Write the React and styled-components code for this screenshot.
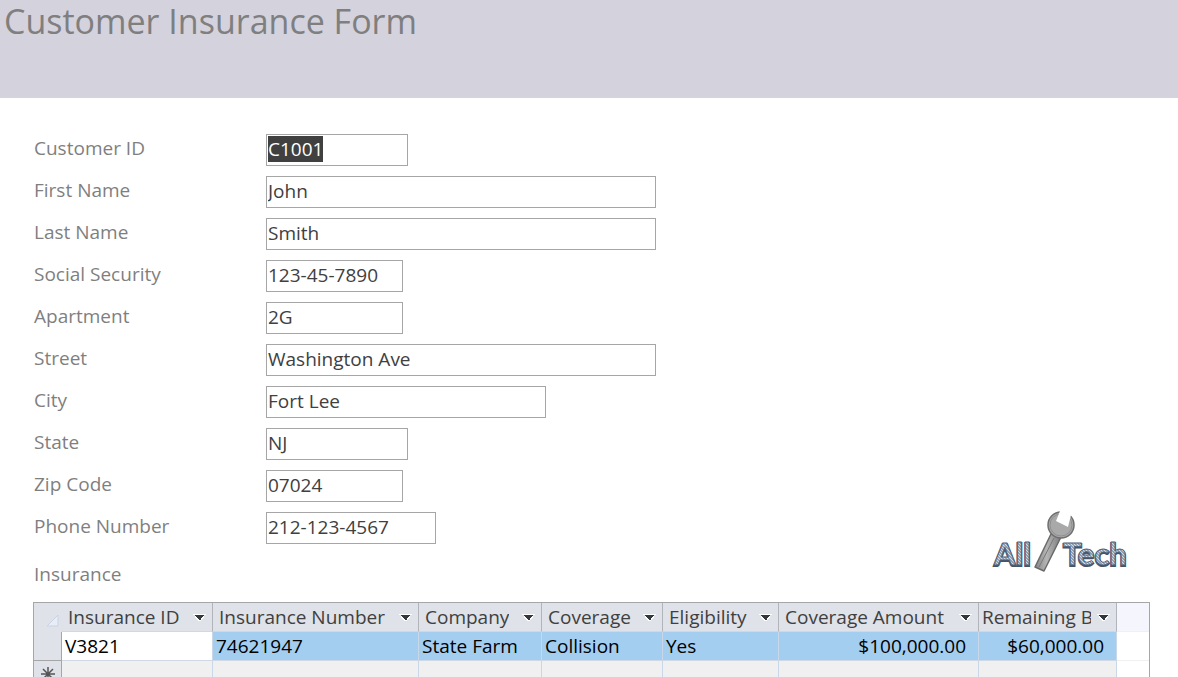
import React, { useEffect, useRef } from "react";
import styled, { createGlobalStyle } from "styled-components";

const GlobalStyle = createGlobalStyle`
  * { box-sizing: border-box; }
  body {
    margin: 0;
    overflow: hidden;
    background: #ffffff;
    font-family: "Open Sans", "Liberation Sans", sans-serif;
    font-size: 19px;
  }
`;

const Banner = styled.header`
  height: 98px;
  padding: 0 4px;
  background: #d4d2dd;
`;

const Title = styled.h1`
  margin: 0;
  font-size: 34px;
  font-weight: 400;
  line-height: 42px;
  color: #7f7f7f;
`;

const Page = styled.main`
  padding: 36px 28px 0 33px;
`;

const Details = styled.div`
  display: flex;
  justify-content: space-between;
  align-items: flex-end;
  padding-right: 22px;
`;

const Fields = styled.form`
  display: flex;
  flex-direction: column;
  gap: 10px;
`;

const Field = styled.div`
  display: grid;
  grid-template-columns: 232px auto;
  padding-left: 1px;
  justify-content: start;
`;

const Label = styled.label`
  line-height: 28px;
  color: #7f7f7f;
`;

const TextBox = styled.input`
  width: ${({ $width }) => $width}px;
  height: 32px;
  padding: 0 1px 3px;
  border: 1px solid #a6a6a6;
  border-radius: 0;
  outline: none;
  background: #ffffff;
  font: inherit;
  line-height: 27px;
  color: #404040;
  &::selection { background: #404040; color: #ffffff; }
`;

const SectionTitle = styled.h2`
  margin: 16px 0 14px;
  padding-left: 1px;
  font-size: 19px;
  font-weight: 400;
  line-height: 28px;
  color: #7f7f7f;
`;

const Logo = styled.svg`
  width: 138px;
  height: 64px;
  margin-bottom: 30px;
  overflow: visible;
`;

const Sheet = styled.table`
  width: 100%;
  table-layout: fixed;
  border-collapse: separate;
  border-spacing: 0;
  border: 1px solid #a6a6a6;
  border-bottom: 0;
`;

const Col = styled.col`
  width: ${({ $width }) => ($width ? `${$width}px` : "auto")};
`;

const HeadCell = styled.th`
  height: 29px;
  padding: 0 6px 0 ${({ $tight }) => ($tight ? 3 : 6)}px;
  border-right: 1px solid #b1b5ba;
  border-bottom: 1px solid #d0d7e5;
  background: #dfe2e8;
  font-weight: 400;
  line-height: 28px;
  color: #404040;
`;

const HeadContent = styled.div`
  display: flex;
  align-items: center;
  justify-content: space-between;
  gap: 6px;
`;

const HeadText = styled.span`
  overflow: hidden;
  white-space: nowrap;
`;

const MenuButton = styled.button`
  flex: none;
  display: flex;
  padding: 2px 0 0;
  border: 0;
  background: none;
`;

const Corner = styled.td`
  height: 29px;
  padding: 0;
  vertical-align: bottom;
  background: #dfe2e8;
  border-right: 1px solid ${({ $ruled }) => ($ruled ? "#a6a6a6" : "#dfe2e8")};
  border-bottom: 1px solid ${({ $ruled }) => ($ruled ? "#a6a6a6" : "#dfe2e8")};
  line-height: 0;
  text-align: center;
`;

const CornerMark = styled.svg`
  display: inline-block;
  margin-left: 11px;
`;

const Cell = styled.td`
  height: 29px;
  padding: 0 ${({ $right }) => $right || 3}px 0 3px;
  border-right: 1px solid #c8d8e8;
  border-bottom: 1px solid #d0d7e5;
  background: ${({ $tone }) =>
    ({ current: "#ffffff", selected: "#a4cef0", blank: "#f0f0f0" })[$tone]};
  line-height: 28px;
  white-space: nowrap;
  text-align: ${({ $right }) => ($right ? "right" : "left")};
  color: #000000;
`;

const Filler = styled.td`
  padding: 0;
  border-bottom: 1px solid #f0f0f0;
  background: ${({ $head }) => ($head ? "#f5f5fd" : "#ffffff")};
`;

const fields = [
  ["id", "Customer ID", "C1001", 142],
  ["first", "First Name", "John", 390],
  ["last", "Last Name", "Smith", 390],
  ["ssn", "Social Security", "123-45-7890", 137],
  ["apartment", "Apartment", "2G", 137],
  ["street", "Street", "Washington Ave", 390],
  ["city", "City", "Fort Lee", 280],
  ["state", "State", "NJ", 142],
  ["zip", "Zip Code", "07024", 137],
  ["phone", "Phone Number", "212-123-4567", 170],
];

const columns = [
  { name: "Insurance ID", value: "V3821", width: 151 },
  { name: "Insurance Number", value: "74621947", width: 206 },
  { name: "Company", value: "State Farm", width: 123 },
  { name: "Coverage", value: "Collision", width: 121 },
  { name: "Eligibility", value: "Yes", width: 116 },
  { name: "Coverage Amount", value: "$100,000.00", width: 200, right: 12 },
  { name: "Remaining Balance", value: "$60,000.00", width: 138, right: 12, tight: true },
];

function Arrow() {
  return (
    <svg width="13" height="8" viewBox="0 0 13 8" shapeRendering="crispEdges" aria-hidden="true">
      <path d="M0 0h13v1H0zM2 2h9v2h-1v1H9v1H8v1H5V6H4V5H3V4H2z" fill="#ffffff" />
      <path d="M2 1h9v1h-1v1H9v1H8v2H6V5H5V4H4V3H3V2H2z" fill="#33383f" />
    </svg>
  );
}

function AllTechLogo() {
  return (
    <Logo viewBox="0 0 138 64" role="img" aria-label="All Tech">
      <defs>
        <pattern id="weave" width="3" height="3" patternUnits="userSpaceOnUse">
          <rect width="3" height="3" fill="#5d7490" />
          <path d="M0 0L3 3M-1 2L1 4M2 -1L4 1" stroke="#d3dae2" strokeWidth="1.3" />
        </pattern>
        <linearGradient id="steel" x1="0" x2="1">
          <stop offset="0" stopColor="#858585" />
          <stop offset=".45" stopColor="#b5b5b5" />
          <stop offset="1" stopColor="#7c7c7c" />
        </linearGradient>
      </defs>
      <g fontFamily="Lato, sans-serif" fontWeight="700" fontSize="31">
        <g fill="#46546a" stroke="#46546a" strokeWidth="2">
          <text x="4" y="58">All</text>
          <text x="73" y="58">Tech</text>
        </g>
        <g fill="url(#weave)" stroke="#4f627b" strokeWidth=".8">
          <text x="4" y="57">All</text>
          <text x="73" y="57">Tech</text>
        </g>
      </g>
      <path d="M61 26L45 59L54 63L71 29z" fill="url(#steel)" stroke="#6a6a6a" strokeWidth="1.5" strokeLinejoin="round" />
      <path d="M64 30L49 59" stroke="#7a7a7a" fill="none" />
      <circle cx="71" cy="17" r="13" fill="#a9a9a9" stroke="#6f6f6f" strokeWidth="1.5" />
      <circle cx="71" cy="17" r="11" fill="none" stroke="#8f8f8f" />
      <path d="M70 3L66 13L78 19L81 7L79 3z" fill="#ffffff" />
    </Logo>
  );
}

export default function App() {
  const firstBox = useRef(null);

  useEffect(() => {
    firstBox.current.focus();
    firstBox.current.select();
  }, []);

  return (
    <>
      <GlobalStyle />
      <Banner>
        <Title>Customer Insurance Form</Title>
      </Banner>
      <Page>
        <Details>
          <div>
            <Fields>
              {fields.map(([id, label, value, width], i) => (
                <Field key={id}>
                  <Label htmlFor={id}>{label}</Label>
                  <TextBox
                    id={id}
                    ref={i === 0 ? firstBox : undefined}
                    defaultValue={value}
                    $width={width}
                    spellCheck={false}
                  />
                </Field>
              ))}
            </Fields>
            <SectionTitle>Insurance</SectionTitle>
          </div>
          <AllTechLogo />
        </Details>
        <Sheet>
          <colgroup>
            <Col $width={28} />
            {columns.map((c) => (
              <Col key={c.name} $width={c.width} />
            ))}
            <Col />
          </colgroup>
          <thead>
            <tr>
              <Corner>
                <CornerMark width="12" height="16" viewBox="0 0 12 16" aria-hidden="true">
                  <path d="M11 0V11H0z" fill="#e9edf5" stroke="#c9d3e4" />
                </CornerMark>
              </Corner>
              {columns.map((c) => (
                <HeadCell key={c.name} scope="col" $tight={c.tight}>
                  <HeadContent>
                    <HeadText>{c.name}</HeadText>
                    <MenuButton type="button" aria-label={`${c.name} menu`}>
                      <Arrow />
                    </MenuButton>
                  </HeadContent>
                </HeadCell>
              ))}
              <Filler $head />
            </tr>
          </thead>
          <tbody>
            <tr>
              <Corner $ruled />
              {columns.map((c, i) => (
                <Cell key={c.name} $tone={i === 0 ? "current" : "selected"} $right={c.right}>
                  {c.value}
                </Cell>
              ))}
              <Filler />
            </tr>
            <tr>
              <Corner $ruled>
                <svg width="14" height="22" viewBox="0 0 14 22" aria-hidden="true">
                  <path d="M7 0V14M0 7H14M2 2L12 12M12 2L2 12" stroke="#555555" strokeWidth="1.5" />
                </svg>
              </Corner>
              {columns.map((c) => (
                <Cell key={c.name} $tone="blank" />
              ))}
              <Filler />
            </tr>
          </tbody>
        </Sheet>
      </Page>
    </>
  );
}
